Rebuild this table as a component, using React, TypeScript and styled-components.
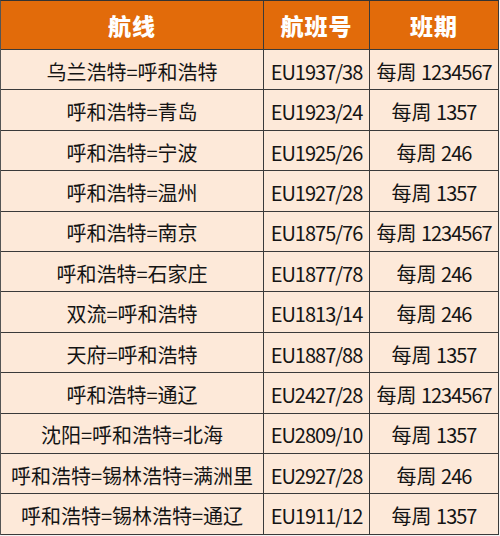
import React from "react";
import styled, { createGlobalStyle } from "styled-components";

const Global = createGlobalStyle`
  html, body { margin: 0; padding: 0; background: #f4f4f4; }
  body { font-family: "Noto Sans CJK SC", "Noto Sans", sans-serif; }
`;

const Table = styled.div`
  display: grid;
  grid-template-columns: 263px 106px 129px;
  grid-template-rows: 49px repeat(12, 40.42px);
  width: 499px;
  box-sizing: border-box;
  border-left: 1px solid #555;
  border-top: 1px solid #333;
`;

const Cell = styled.div<{ $head?: boolean }>`
  box-sizing: border-box;
  display: flex;
  align-items: center;
  justify-content: center;
  border-right: 1px solid #3a3a3a;
  border-bottom: 1px solid #3a3a3a;
  background: ${(p) => (p.$head ? "#E26B0A" : "#FDE9D9")};
  color: ${(p) => (p.$head ? "#ffffff" : "#141414")};
  font-family: "Noto Sans CJK SC", "Noto Sans", sans-serif;
  font-size: ${(p) => (p.$head ? "23px" : "20px")};
  font-weight: ${(p) => (p.$head ? 900 : 400)};
  letter-spacing: ${(p) => (p.$head ? "1px" : "0")};
  white-space: nowrap;
  padding-top: ${(p) => (p.$head ? "0" : "3px")};
`;

const Text = styled.span`
  white-space: pre;
`;

const Latin = styled.span`
  letter-spacing: -1px;
`;

const rows: [string, string, string][] = [
  ["乌兰浩特=呼和浩特", "EU1937/38", "1234567"],
  ["呼和浩特=青岛", "EU1923/24", "1357"],
  ["呼和浩特=宁波", "EU1925/26", "246"],
  ["呼和浩特=温州", "EU1927/28", "1357"],
  ["呼和浩特=南京", "EU1875/76", "1234567"],
  ["呼和浩特=石家庄", "EU1877/78", "246"],
  ["双流=呼和浩特", "EU1813/14", "246"],
  ["天府=呼和浩特", "EU1887/88", "1357"],
  ["呼和浩特=通辽", "EU2427/28", "1234567"],
  ["沈阳=呼和浩特=北海", "EU2809/10", "1357"],
  ["呼和浩特=锡林浩特=满洲里", "EU2927/28", "246"],
  ["呼和浩特=锡林浩特=通辽", "EU1911/12", "1357"],
];

export default function App() {
  return (
    <>
      <Global />
      <Table>
        <Cell $head>航线</Cell>
        <Cell $head>航班号</Cell>
        <Cell $head>班期</Cell>
        {rows.map((r, i) => (
          <React.Fragment key={i}>
            <Cell>{r[0]}</Cell>
            <Cell>
              <Latin>{r[1]}</Latin>
            </Cell>
            <Cell>
              <Text>
                每周 <Latin>{r[2]}</Latin>
              </Text>
            </Cell>
          </React.Fragment>
        ))}
      </Table>
    </>
  );
}
